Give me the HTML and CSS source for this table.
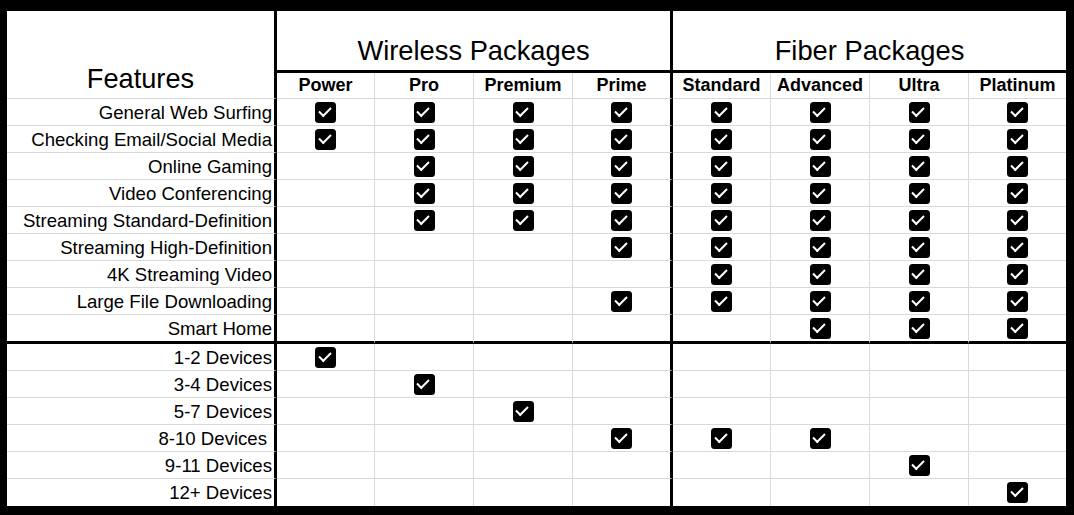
FILE: index.html
```html
<!DOCTYPE html>
<html>
<head>
<meta charset="utf-8">
<link rel="stylesheet" href="styles.css">
</head>
<body>
<div class="sheet">
  <div class="f fhead">Features</div>
  <div class="title wt">Wireless Packages</div>
  <div class="title ft">Fiber Packages</div>

  <div class="c sh">Power</div><div class="c sh">Pro</div><div class="c sh">Premium</div><div class="c sh w4">Prime</div>
  <div class="c sh">Standard</div><div class="c sh">Advanced</div><div class="c sh">Ultra</div><div class="c sh f4">Platinum</div>

  <div class="row">
    <div class="f">General Web Surfing</div>
    <div class="c"><i class="ck"></i></div><div class="c"><i class="ck"></i></div><div class="c"><i class="ck"></i></div><div class="c w4"><i class="ck"></i></div>
    <div class="c"><i class="ck"></i></div><div class="c"><i class="ck"></i></div><div class="c"><i class="ck"></i></div><div class="c f4"><i class="ck"></i></div>
  </div>
  <div class="row">
    <div class="f">Checking Email/Social Media</div>
    <div class="c"><i class="ck"></i></div><div class="c"><i class="ck"></i></div><div class="c"><i class="ck"></i></div><div class="c w4"><i class="ck"></i></div>
    <div class="c"><i class="ck"></i></div><div class="c"><i class="ck"></i></div><div class="c"><i class="ck"></i></div><div class="c f4"><i class="ck"></i></div>
  </div>
  <div class="row">
    <div class="f">Online Gaming</div>
    <div class="c"></div><div class="c"><i class="ck"></i></div><div class="c"><i class="ck"></i></div><div class="c w4"><i class="ck"></i></div>
    <div class="c"><i class="ck"></i></div><div class="c"><i class="ck"></i></div><div class="c"><i class="ck"></i></div><div class="c f4"><i class="ck"></i></div>
  </div>
  <div class="row">
    <div class="f">Video Conferencing</div>
    <div class="c"></div><div class="c"><i class="ck"></i></div><div class="c"><i class="ck"></i></div><div class="c w4"><i class="ck"></i></div>
    <div class="c"><i class="ck"></i></div><div class="c"><i class="ck"></i></div><div class="c"><i class="ck"></i></div><div class="c f4"><i class="ck"></i></div>
  </div>
  <div class="row">
    <div class="f">Streaming Standard-Definition</div>
    <div class="c"></div><div class="c"><i class="ck"></i></div><div class="c"><i class="ck"></i></div><div class="c w4"><i class="ck"></i></div>
    <div class="c"><i class="ck"></i></div><div class="c"><i class="ck"></i></div><div class="c"><i class="ck"></i></div><div class="c f4"><i class="ck"></i></div>
  </div>
  <div class="row">
    <div class="f">Streaming High-Definition</div>
    <div class="c"></div><div class="c"></div><div class="c"></div><div class="c w4"><i class="ck"></i></div>
    <div class="c"><i class="ck"></i></div><div class="c"><i class="ck"></i></div><div class="c"><i class="ck"></i></div><div class="c f4"><i class="ck"></i></div>
  </div>
  <div class="row">
    <div class="f">4K Streaming Video</div>
    <div class="c"></div><div class="c"></div><div class="c"></div><div class="c w4"></div>
    <div class="c"><i class="ck"></i></div><div class="c"><i class="ck"></i></div><div class="c"><i class="ck"></i></div><div class="c f4"><i class="ck"></i></div>
  </div>
  <div class="row">
    <div class="f">Large File Downloading</div>
    <div class="c"></div><div class="c"></div><div class="c"></div><div class="c w4"><i class="ck"></i></div>
    <div class="c"><i class="ck"></i></div><div class="c"><i class="ck"></i></div><div class="c"><i class="ck"></i></div><div class="c f4"><i class="ck"></i></div>
  </div>
  <div class="row sep">
    <div class="f">Smart Home</div>
    <div class="c"></div><div class="c"></div><div class="c"></div><div class="c w4"></div>
    <div class="c"></div><div class="c"><i class="ck"></i></div><div class="c"><i class="ck"></i></div><div class="c f4"><i class="ck"></i></div>
  </div>

  <div class="row">
    <div class="f">1-2 Devices</div>
    <div class="c"><i class="ck"></i></div><div class="c"></div><div class="c"></div><div class="c w4"></div>
    <div class="c"></div><div class="c"></div><div class="c"></div><div class="c f4"></div>
  </div>
  <div class="row">
    <div class="f">3-4 Devices</div>
    <div class="c"></div><div class="c"><i class="ck"></i></div><div class="c"></div><div class="c w4"></div>
    <div class="c"></div><div class="c"></div><div class="c"></div><div class="c f4"></div>
  </div>
  <div class="row">
    <div class="f">5-7 Devices</div>
    <div class="c"></div><div class="c"></div><div class="c"><i class="ck"></i></div><div class="c w4"></div>
    <div class="c"></div><div class="c"></div><div class="c"></div><div class="c f4"></div>
  </div>
  <div class="row">
    <div class="f trail">8-10 Devices</div>
    <div class="c"></div><div class="c"></div><div class="c"></div><div class="c w4"><i class="ck"></i></div>
    <div class="c"><i class="ck"></i></div><div class="c"><i class="ck"></i></div><div class="c"></div><div class="c f4"></div>
  </div>
  <div class="row">
    <div class="f">9-11 Devices</div>
    <div class="c"></div><div class="c"></div><div class="c"></div><div class="c w4"></div>
    <div class="c"></div><div class="c"></div><div class="c"><i class="ck"></i></div><div class="c f4"></div>
  </div>
  <div class="row last">
    <div class="f">12+ Devices</div>
    <div class="c"></div><div class="c"></div><div class="c"></div><div class="c w4"></div>
    <div class="c"></div><div class="c"></div><div class="c"></div><div class="c f4"><i class="ck"></i></div>
  </div>
</div>
</body>
</html>
```

FILE: styles.css
```css
* { box-sizing: border-box; }

html, body {
  margin: 0;
  padding: 0;
  background: #000;
}

body {
  width: 1074px;
  height: 515px;
  padding: 11px 8px 9px 7px;
  font-family: "Liberation Sans", Arial, sans-serif;
  color: #000;
}

.sheet {
  width: 1059px;
  height: 495px;
  background: #fff;
  display: grid;
  grid-template-columns: 270px 98px 99px 99px 100px 98px 99px 99px 97px;
  grid-template-rows: 62px 26px repeat(8, 27px) 29px repeat(6, 27px);
}

.row { display: contents; }

.f {
  border-right: 3px solid #000;
  border-bottom: 1px solid #d9d9d9;
  font-size: 18.6px;
  line-height: 26px;
  text-align: right;
  padding-right: 2px;
  padding-top: 1px;
  white-space: nowrap;
  overflow: hidden;
}

.f.trail { padding-right: 7px; }

.fhead {
  grid-row: 1 / span 2;
  display: flex;
  align-items: flex-end;
  justify-content: center;
  font-size: 27.2px;
  line-height: 31px;
  padding: 0 0 4px 0;
  text-align: center;
}

.title {
  grid-column: span 4;
  border-bottom: 3px solid #000;
  display: flex;
  align-items: flex-end;
  justify-content: center;
  font-size: 27.3px;
  line-height: 31px;
  padding-bottom: 4px;
}

.title.wt { border-right: 3px solid #000; }

.c {
  border-right: 1px solid #d9d9d9;
  border-bottom: 1px solid #d9d9d9;
  display: flex;
  align-items: center;
  justify-content: center;
}

.c.w4 { border-right: 3px solid #000; }
.c.f4 { border-right: none; }

.sh {
  font-weight: 700;
  font-size: 18px;
  line-height: 25px;
  white-space: nowrap;
}

.sep > div { border-bottom: 3px solid #000; }
.last > div { border-bottom: none; }

.ck {
  display: block;
  position: relative;
  width: 21px;
  height: 21px;
  background: #000;
  border-radius: 3.5px;
}

.ck::after {
  content: "";
  position: absolute;
  box-sizing: content-box;
  left: 3.5px;
  top: 5px;
  width: 10px;
  height: 5px;
  border-left: 2.5px solid #fff;
  border-bottom: 2.5px solid #fff;
  transform: rotate(-45deg);
}
```
